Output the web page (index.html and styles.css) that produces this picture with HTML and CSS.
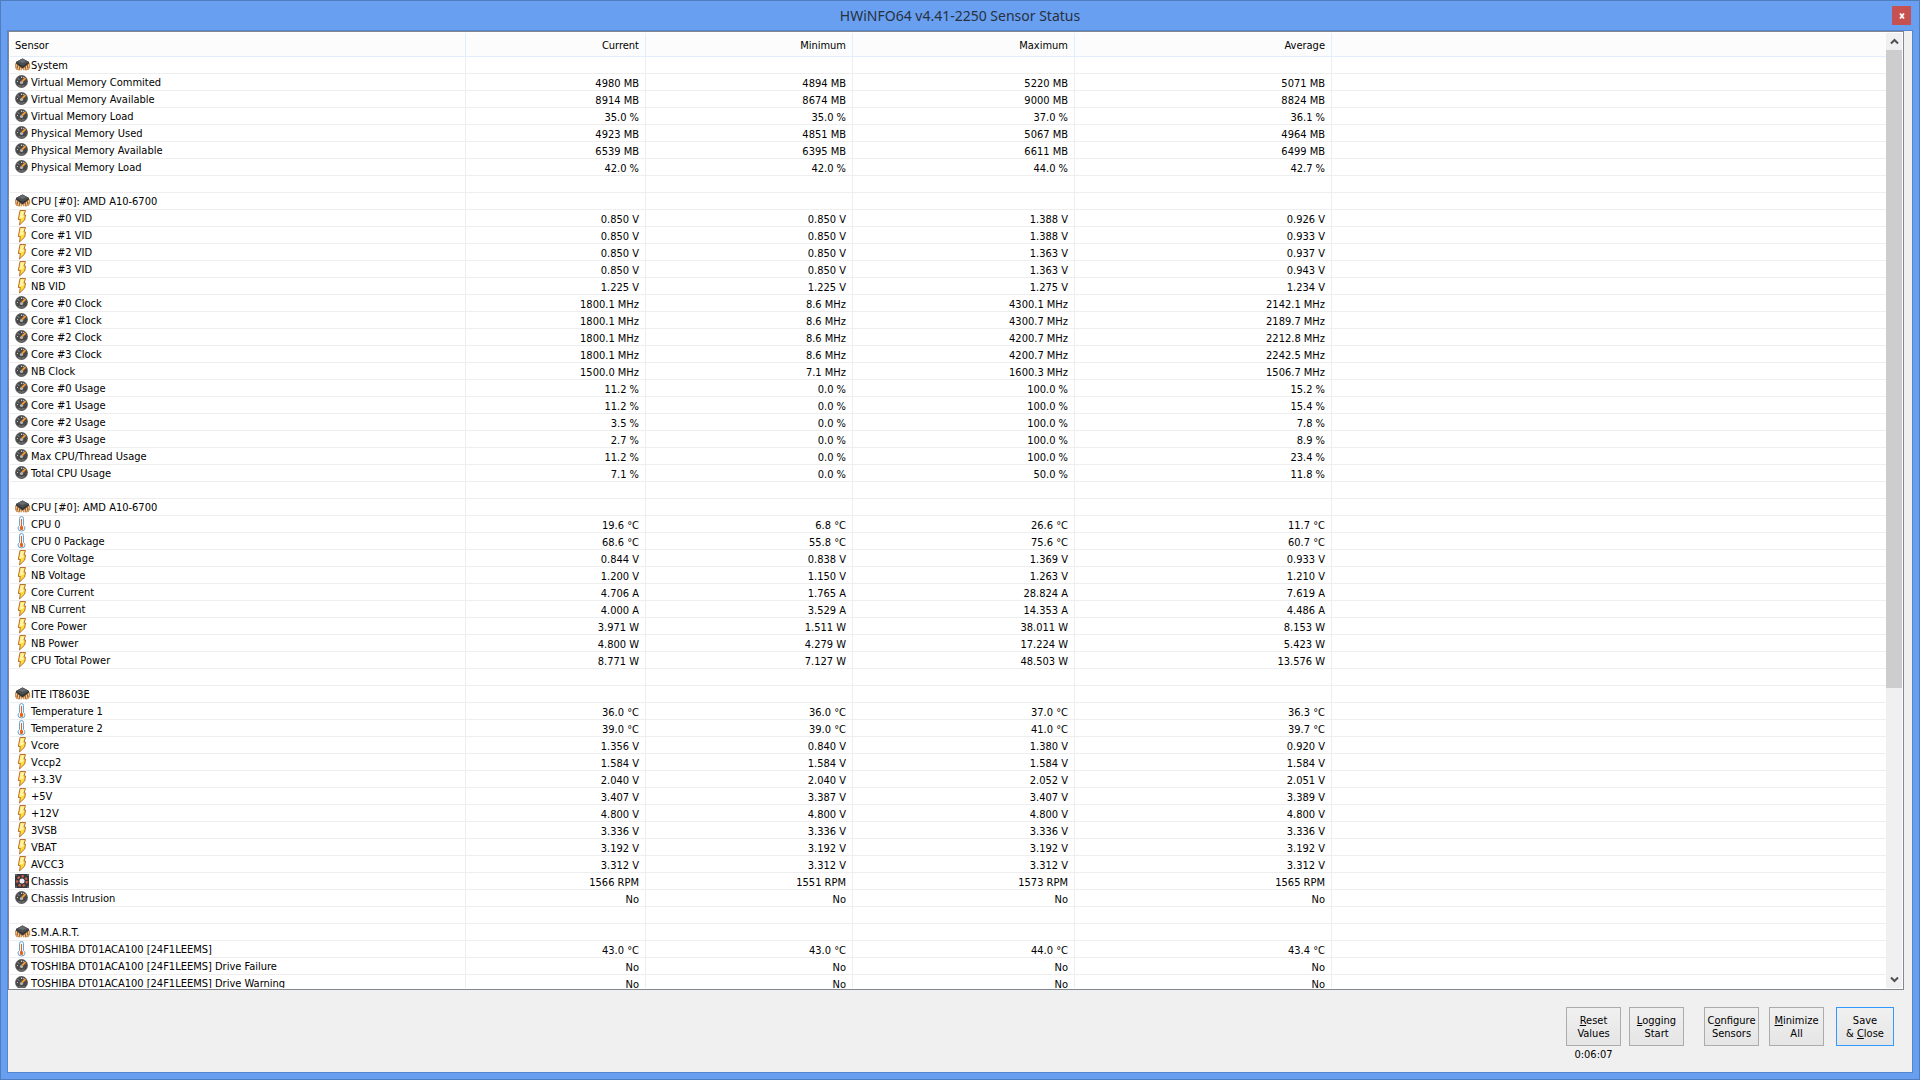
FILE: index.html
```
<!DOCTYPE html>
<html lang="en">
<head>
<meta charset="utf-8">
<title>HWiNFO64 v4.41-2250 Sensor Status</title>
<link rel="stylesheet" href="styles.css">
</head>
<body>
<svg class="sprite" aria-hidden="true">
  <symbol id="chip" viewBox="0 0 16 16">
    <path d="M0 6.500l2-1 5 4 .5 2-1 2-1.500-.5-1 .8-1.500-1-1 .4-.8-1.800-1-.6z" fill="#c9935c"/>
    <path d="M15 6.500l-2-1-5 4-.5 2 1 2 1.500-.5 1 .8 1.500-1 1 .4.800-1.800 1-.6z" fill="#c9935c"/>
    <path d="M1.500 7.500v2M3.500 9v3M5.500 11v2M13.500 7.500v2M11.500 9v3M9.500 11v2" stroke="#f3c48d" fill="none"/>
    <path d="M2.500 8v3M4.500 9.500v3M12.500 8v3M10.500 9.500v3" stroke="#a8652c" fill="none"/>
    <path d="M7.500 1.500l6.500 3.500v1.500l-6.500 5-6.500-5v-1.500z" fill="#333638"/>
    <path d="M7.500 1.500l6.500 3.500-6.500 4-6.500-4z" fill="#4b4f51"/>
    <path d="M7.500 2l4 2.200-4 1.800-4-1.800z" fill="#696d70"/>
  </symbol>
  <symbol id="gauge" viewBox="0 0 16 16">
    <circle cx="6.500" cy="7.500" r="6.400" fill="#5a5a5a"/>
    <circle cx="6.500" cy="7.500" r="5.400" fill="#484848"/>
    <path d="M2 7.500h1M3 4.500l1 1M6.500 2.500v1.500M8.500 3l-.4 1" stroke="#c8c8c8" fill="none"/>
    <circle cx="6.500" cy="8.500" r="1.600" fill="#b5b5b5"/>
    <path d="M7 7.500l3.500-3.500" stroke="#f09a33" stroke-width="1.800"/>
    <path d="M3.500 11.500q3 1.500 6 0" stroke="#7d7d7d" fill="none"/>
  </symbol>
  <symbol id="bolt" viewBox="0 0 16 16">
    <path d="M5 .5h5.500l-1.500 4.500h1.500l-.8 5-5.200 5 .8-5.500h-2z" fill="#ffdd2e" stroke="#b86f3c"/>
    <path d="M5.800 1.300h3.500l-1.500 4.500h1.500l-1.500 2.500-3.300.300z" fill="#fff3a6"/>
  </symbol>
  <symbol id="temp" viewBox="0 0 16 16">
    <path d="M4.500 2.500q0-2 2-2t2 2v7q1.500 1 1.500 2.500 0 3-3.500 3t-3.500-3q0-1.500 1.500-2.500z" fill="#eaf6fd" stroke="#6fa5c9"/>
    <path d="M6.500 3v9" stroke="#e8641e"/>
    <rect x="5" y="10" width="3" height="4" rx="1" fill="#ef6215"/>
  </symbol>
  <symbol id="fan" viewBox="0 0 16 16">
    <rect y="1" width="14" height="14" fill="#35393c"/>
    <circle cx="7" cy="8" r="4.800" fill="none" stroke="#d0604a" stroke-width="2.200" stroke-dasharray="2.400 1.900"/>
    <circle cx="7" cy="8" r="2.500" fill="#f0eaf2"/>
    <path d="M0 1h2v2H0zM12 1h2v2h-2zM0 13h2v2H0zM12 13h2v2h-2z" fill="#5b6062"/>
  </symbol>
</svg>

<div class="window">
  <header class="titlebar">
    <h1 class="title">HWiNFO64 v4.41-2250 Sensor Status</h1>
    <button class="close" type="button" aria-label="Close">
      <svg width="6" height="6" viewBox="0 0 6 6"><path d="M1 .5l4 5M5 .5l-4 5" stroke="#fff" stroke-width="1.800"/></svg>
    </button>
  </header>
  <main class="client">
    <div class="list">
      <div class="viewport">
        <table class="sensors">
          <colgroup><col class="c-name"><col class="c-current"><col class="c-min"><col class="c-max"><col class="c-avg"><col></colgroup>
          <thead>
            <tr><th scope="col">Sensor</th><th scope="col">Current</th><th scope="col">Minimum</th><th scope="col">Maximum</th><th scope="col">Average</th><td></td></tr>
          </thead>
          <tbody id="rows"></tbody>
        </table>
      </div>
      <div class="scrollbar">
        <button class="arrow" type="button" aria-label="Scroll up"><svg width="9" height="7" viewBox="0 0 9 7"><path d="M1 5.500l3.500-3.500 3.500 3.500" fill="none" stroke="#505050" stroke-width="2"/></svg></button>
        <div class="track"><div class="thumb"></div></div>
        <button class="arrow" type="button" aria-label="Scroll down"><svg width="9" height="7" viewBox="0 0 9 7"><path d="M1 1.500l3.500 3.500 3.500-3.500" fill="none" stroke="#505050" stroke-width="2"/></svg></button>
      </div>
    </div>
    <footer class="actions">
      <div class="group">
        <div class="timed">
          <button class="btn" type="button"><u>R</u>eset<br>Values</button>
          <span class="elapsed">0:06:07</span>
        </div>
        <button class="btn" type="button"><u>L</u>ogging<br>Start</button>
      </div>
      <div class="group wide">
        <button class="btn" type="button">C<u>o</u>nfigure<br>Sensors</button>
        <button class="btn" type="button"><u>M</u>inimize<br>All</button>
        <button class="btn primary" type="button">Save<br>&amp; <u>C</u>lose</button>
      </div>
    </footer>
  </main>
</div>
<script src="sensors.js"></script>
</body>
</html>
```
FILE: styles.css
```
* { box-sizing: border-box; }

body {
  margin: 0;
  font-family: "DejaVu Sans Condensed", "DejaVu Sans", sans-serif;
  font-size: 11px;
  line-height: 13px;
  color: #000;
}

button { font: inherit; color: inherit; padding: 0; }

.sprite { display: none; }

.window {
  display: flex;
  flex-direction: column;
  height: 100vh;
  padding: 0 6px 6px;
  background: #699ff1;
  border: 1px solid #4f7dc0;
}

.titlebar {
  display: grid;
  grid-template-columns: 1fr auto 1fr;
  align-items: center;
  flex: none;
  height: 29px;
}

.title {
  grid-column: 2;
  margin: 0;
  font: 400 14px/20px "Noto Sans", sans-serif;
  color: #26313f;
}

.close {
  justify-self: end;
  display: grid;
  place-items: center;
  width: 19px;
  height: 19px;
  margin-right: 2px;
  border: 0;
  background: #c75050;
}

.client {
  display: flex;
  flex-direction: column;
  flex: 1;
  min-height: 0;
  background: #f0f0f0;
  border: 1px solid #5685d0;
}

.list {
  display: flex;
  flex: 1;
  min-height: 0;
  margin-right: 8px;
  padding: 1px;
  background: #fff;
  border: 1px solid #828790;
}

.viewport { flex: 1; overflow: hidden; }

.sensors {
  width: 100%;
  table-layout: fixed;
  border-collapse: separate;
  border-spacing: 0;
}

.c-name { width: 456px; }
.c-current { width: 180px; }
.c-min { width: 207px; }
.c-max { width: 222px; }
.c-avg { width: 257px; }

.sensors thead th, .sensors thead td {
  height: 24px;
  padding: 2px 6px 0;
  background: #fcfcfc;
  border-bottom: 1px solid #e3eefd;
  border-right: 1px solid #e3eefd;
  font-weight: 400;
  text-align: right;
}

.sensors thead th:first-child { padding-left: 5px; text-align: left; }

.sensors tbody th, .sensors tbody td {
  height: 17px;
  padding: 2px 6px 0;
  border-bottom: 1px solid #eee;
  border-right: 1px solid #eee;
  font-weight: 400;
  text-align: right;
  white-space: nowrap;
}

.sensors tbody th { padding: 0 5px; }

.sensors tr > :last-child { border-right: 0; }

.label { display: flex; height: 16px; }

.name { padding-top: 2px; }

.icon { flex: none; width: 16px; height: 16px; }

.scrollbar {
  display: flex;
  flex-direction: column;
  width: 16px;
  background: #f0f0f0;
}

.arrow {
  display: grid;
  place-items: center;
  height: 17px;
  border: 0;
  background: none;
}

.track { flex: 1; }

.thumb { height: 638px; max-height: 100%; background: #cdcdcd; }

.actions {
  display: flex;
  justify-content: flex-end;
  gap: 20px;
  flex: none;
  height: 82px;
  padding: 17px 18px 0 0;
}

.group { display: flex; align-items: flex-start; gap: 8px; }
.wide { gap: 10px; }

.timed { display: flex; flex-direction: column; align-items: center; gap: 2px; }

.btn {
  width: 55px;
  height: 39px;
  background: linear-gradient(#f0f0f0, #e5e5e5);
  border: 1px solid #acacac;
  white-space: nowrap;
}

.primary { width: 58px; margin-left: 2px; border-color: #3399ff; }
```
FILE: sensors.js
```
const sensors = [
  ["chip", "System"],
  ["gauge", "Virtual Memory Commited", "4980 MB", "4894 MB", "5220 MB", "5071 MB"],
  ["gauge", "Virtual Memory Available", "8914 MB", "8674 MB", "9000 MB", "8824 MB"],
  ["gauge", "Virtual Memory Load", "35.0 %", "35.0 %", "37.0 %", "36.1 %"],
  ["gauge", "Physical Memory Used", "4923 MB", "4851 MB", "5067 MB", "4964 MB"],
  ["gauge", "Physical Memory Available", "6539 MB", "6395 MB", "6611 MB", "6499 MB"],
  ["gauge", "Physical Memory Load", "42.0 %", "42.0 %", "44.0 %", "42.7 %"],
  [],
  ["chip", "CPU [#0]: AMD A10-6700"],
  ["bolt", "Core #0 VID", "0.850 V", "0.850 V", "1.388 V", "0.926 V"],
  ["bolt", "Core #1 VID", "0.850 V", "0.850 V", "1.388 V", "0.933 V"],
  ["bolt", "Core #2 VID", "0.850 V", "0.850 V", "1.363 V", "0.937 V"],
  ["bolt", "Core #3 VID", "0.850 V", "0.850 V", "1.363 V", "0.943 V"],
  ["bolt", "NB VID", "1.225 V", "1.225 V", "1.275 V", "1.234 V"],
  ["gauge", "Core #0 Clock", "1800.1 MHz", "8.6 MHz", "4300.1 MHz", "2142.1 MHz"],
  ["gauge", "Core #1 Clock", "1800.1 MHz", "8.6 MHz", "4300.7 MHz", "2189.7 MHz"],
  ["gauge", "Core #2 Clock", "1800.1 MHz", "8.6 MHz", "4200.7 MHz", "2212.8 MHz"],
  ["gauge", "Core #3 Clock", "1800.1 MHz", "8.6 MHz", "4200.7 MHz", "2242.5 MHz"],
  ["gauge", "NB Clock", "1500.0 MHz", "7.1 MHz", "1600.3 MHz", "1506.7 MHz"],
  ["gauge", "Core #0 Usage", "11.2 %", "0.0 %", "100.0 %", "15.2 %"],
  ["gauge", "Core #1 Usage", "11.2 %", "0.0 %", "100.0 %", "15.4 %"],
  ["gauge", "Core #2 Usage", "3.5 %", "0.0 %", "100.0 %", "7.8 %"],
  ["gauge", "Core #3 Usage", "2.7 %", "0.0 %", "100.0 %", "8.9 %"],
  ["gauge", "Max CPU/Thread Usage", "11.2 %", "0.0 %", "100.0 %", "23.4 %"],
  ["gauge", "Total CPU Usage", "7.1 %", "0.0 %", "50.0 %", "11.8 %"],
  [],
  ["chip", "CPU [#0]: AMD A10-6700"],
  ["temp", "CPU 0", "19.6 °C", "6.8 °C", "26.6 °C", "11.7 °C"],
  ["temp", "CPU 0 Package", "68.6 °C", "55.8 °C", "75.6 °C", "60.7 °C"],
  ["bolt", "Core Voltage", "0.844 V", "0.838 V", "1.369 V", "0.933 V"],
  ["bolt", "NB Voltage", "1.200 V", "1.150 V", "1.263 V", "1.210 V"],
  ["bolt", "Core Current", "4.706 A", "1.765 A", "28.824 A", "7.619 A"],
  ["bolt", "NB Current", "4.000 A", "3.529 A", "14.353 A", "4.486 A"],
  ["bolt", "Core Power", "3.971 W", "1.511 W", "38.011 W", "8.153 W"],
  ["bolt", "NB Power", "4.800 W", "4.279 W", "17.224 W", "5.423 W"],
  ["bolt", "CPU Total Power", "8.771 W", "7.127 W", "48.503 W", "13.576 W"],
  [],
  ["chip", "ITE IT8603E"],
  ["temp", "Temperature 1", "36.0 °C", "36.0 °C", "37.0 °C", "36.3 °C"],
  ["temp", "Temperature 2", "39.0 °C", "39.0 °C", "41.0 °C", "39.7 °C"],
  ["bolt", "Vcore", "1.356 V", "0.840 V", "1.380 V", "0.920 V"],
  ["bolt", "Vccp2", "1.584 V", "1.584 V", "1.584 V", "1.584 V"],
  ["bolt", "+3.3V", "2.040 V", "2.040 V", "2.052 V", "2.051 V"],
  ["bolt", "+5V", "3.407 V", "3.387 V", "3.407 V", "3.389 V"],
  ["bolt", "+12V", "4.800 V", "4.800 V", "4.800 V", "4.800 V"],
  ["bolt", "3VSB", "3.336 V", "3.336 V", "3.336 V", "3.336 V"],
  ["bolt", "VBAT", "3.192 V", "3.192 V", "3.192 V", "3.192 V"],
  ["bolt", "AVCC3", "3.312 V", "3.312 V", "3.312 V", "3.312 V"],
  ["fan", "Chassis", "1566 RPM", "1551 RPM", "1573 RPM", "1565 RPM"],
  ["gauge", "Chassis Intrusion", "No", "No", "No", "No"],
  [],
  ["chip", "S.M.A.R.T."],
  ["temp", "TOSHIBA DT01ACA100 [24F1LEEMS]", "43.0 °C", "43.0 °C", "44.0 °C", "43.4 °C"],
  ["gauge", "TOSHIBA DT01ACA100 [24F1LEEMS] Drive Failure", "No", "No", "No", "No"],
  ["gauge", "TOSHIBA DT01ACA100 [24F1LEEMS] Drive Warning", "No", "No", "No", "No"],
];

document.getElementById("rows").innerHTML = sensors.map(([icon, name, ...values]) => {
  const head = name
    ? `<th scope="row"><span class="label"><svg class="icon"><use href="#${icon}"/></svg><span class="name">${name}</span></span></th>`
    : "<td></td>";
  const cells = [0, 1, 2, 3, 4].map(i => `<td>${values[i] || ""}</td>`).join("");
  return `<tr>${head}${cells}</tr>`;
}).join("");
```
